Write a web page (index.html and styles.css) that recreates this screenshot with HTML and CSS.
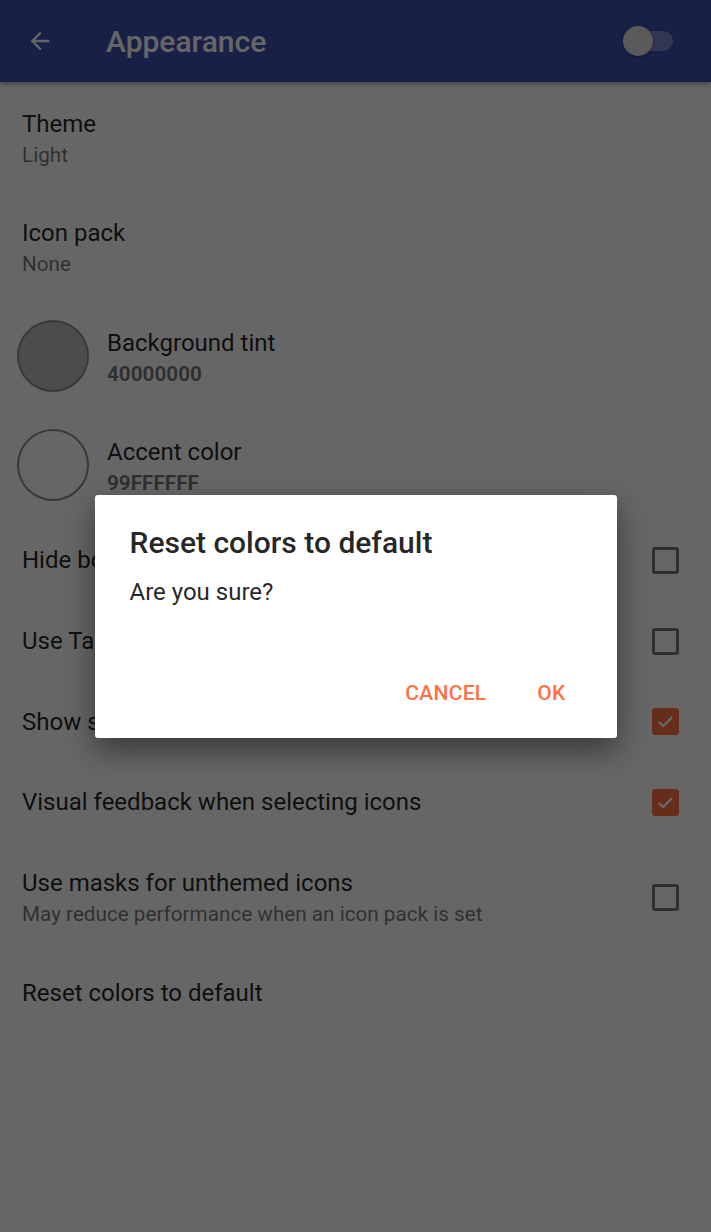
FILE: index.html
```html
<!DOCTYPE html>
<html>
<head>
<meta charset="utf-8">
<link rel="stylesheet" href="styles.css">
</head>
<body>
<div class="app">
  <header class="appbar">
    <svg class="back" width="28" height="28" viewBox="0 0 24 24"><path d="M20 11H7.83l5.59-5.59L12 4l-8 8 8 8 1.41-1.41L7.83 13H20v-2z" fill="#fff"/></svg>
    <div class="appbar-title">Appearance</div>
    <div class="switch"><div class="track"></div><div class="thumb"></div></div>
  </header>
  <main class="list">
    <div class="row two">
      <div class="text"><div class="title">Theme</div><div class="summary">Light</div></div>
    </div>
    <div class="row two">
      <div class="text"><div class="title">Icon pack</div><div class="summary">None</div></div>
    </div>
    <div class="row two color">
      <div class="swatch tint"></div>
      <div class="text"><div class="title">Background tint</div><div class="summary bold">40000000</div></div>
    </div>
    <div class="row two color">
      <div class="swatch accent"></div>
      <div class="text"><div class="title">Accent color</div><div class="summary bold">99FFFFFF</div></div>
    </div>
    <div class="row one">
      <div class="text"><div class="title">Hide bottom bar</div></div>
      <div class="cb"></div>
    </div>
    <div class="row one">
      <div class="text"><div class="title">Use Tab layout</div></div>
      <div class="cb"></div>
    </div>
    <div class="row one">
      <div class="text"><div class="title">Show scrollbar</div></div>
      <div class="cb checked"><svg width="21" height="21" viewBox="0 0 24 24"><path d="M4.5 12.5l4.8 4.8L19.5 7" fill="none" stroke="#fff" stroke-width="2.6"/></svg></div>
    </div>
    <div class="row one">
      <div class="text"><div class="title">Visual feedback when selecting icons</div></div>
      <div class="cb checked"><svg width="21" height="21" viewBox="0 0 24 24"><path d="M4.5 12.5l4.8 4.8L19.5 7" fill="none" stroke="#fff" stroke-width="2.6"/></svg></div>
    </div>
    <div class="row two masks">
      <div class="text"><div class="title">Use masks for unthemed icons</div><div class="summary">May reduce performance when an icon pack is set</div></div>
      <div class="cb"></div>
    </div>
    <div class="row one">
      <div class="text"><div class="title">Reset colors to default</div></div>
    </div>
  </main>
</div>
<div class="scrim">
  <div class="dialog">
    <div class="dlg-title">Reset colors to default</div>
    <div class="dlg-body">Are you sure?</div>
    <div class="dlg-actions">
      <div class="btn">CANCEL</div>
      <div class="btn ok">OK</div>
    </div>
  </div>
</div>
</body>
</html>
```

FILE: styles.css
```css
* { box-sizing: border-box; }
html, body { margin: 0; padding: 0; }
body {
  width: 711px;
  height: 1232px;
  overflow: hidden;
  background: #ffffff;
  font-family: Roboto, "Noto Sans", sans-serif;
  position: relative;
}
.app { width: 711px; height: 1232px; background: #fff; }
.appbar {
  height: 82px;
  background: #3F51B5;
  display: flex;
  align-items: center;
  box-shadow: 0 2px 5px rgba(0,0,0,0.35);
  position: relative;
  z-index: 1;
}
.back { margin-left: 26px; flex: none; }
.appbar-title {
  margin-left: 52px;
  color: #fff;
  font-size: 30px;
  font-weight: 500;
  flex: 1;
}
.switch {
  position: relative;
  width: 56px;
  height: 32px;
  margin-right: 34px;
}
.switch .track {
  position: absolute;
  left: 18px; top: 6px;
  width: 34px; height: 20px;
  border-radius: 10px;
  background: rgba(255,255,255,0.32);
}
.switch .thumb {
  position: absolute;
  left: 2px; top: 1px;
  width: 30px; height: 30px;
  border-radius: 50%;
  background: #e0e0e0;
  box-shadow: 0 1px 3px rgba(0,0,0,0.4);
}
.list { display: flex; flex-direction: column; }
.row {
  display: flex;
  align-items: center;
  padding: 0 32px 0 22px;
}
.row.two { height: 109.5px; padding-top: 6px; }
.row.one { height: 80.7px; }
.row.color { padding-left: 17px; padding-top: 0; }
.row.masks { padding-top: 2px; }
.row.masks .cb { margin-top: -2px; }
.text { flex: 1; min-width: 0; }
.row.color .text { margin-left: 18px; padding-top: 6px; }
.title {
  font-size: 24px;
  line-height: 30px;
  color: rgba(0,0,0,0.87);
  white-space: nowrap;
}
.summary {
  font-size: 20.7px;
  line-height: 32px;
  color: rgba(0,0,0,0.54);
  white-space: nowrap;
}
.summary.bold { font-weight: 700; }
.swatch {
  width: 72px; height: 72px;
  border-radius: 50%;
  border: 2.5px solid #8e8e8e;
  flex: none;
}
.swatch.tint { background: #bfbfbf; }
.swatch.accent { background: #ffffff; }
.cb {
  width: 27px; height: 27px;
  border: 3px solid rgba(0,0,0,0.54);
  border-radius: 3px;
  flex: none;
  display: flex;
  align-items: center;
  justify-content: center;
}
.cb.checked { background: #FF7043; border-color: #FF7043; }
.scrim {
  position: absolute;
  left: 0; top: 0;
  width: 711px; height: 1232px;
  background: rgba(0,0,0,0.6);
  display: flex;
  align-items: center;
  justify-content: center;
  z-index: 5;
}
.dialog {
  width: 522px;
  height: 243px;
  background: #fff;
  border-radius: 3px;
  box-shadow: 0 12px 30px rgba(0,0,0,0.45);
  padding-top: 32px;
  display: flex;
  flex-direction: column;
}
.dlg-title {
  padding-left: 35px;
  font-size: 30px;
  font-weight: 500;
  line-height: 32px;
  color: rgba(0,0,0,0.87);
}
.dlg-body {
  margin-top: 18px;
  padding-left: 35px;
  font-size: 24px;
  line-height: 30px;
  color: rgba(0,0,0,0.87);
}
.dlg-actions {
  margin-top: auto;
  margin-bottom: 20px;
  height: 50px;
  display: flex;
  justify-content: flex-end;
  align-items: center;
  gap: 10px;
  padding-right: 21px;
}
.btn {
  color: #FF7043;
  font-size: 21px;
  font-weight: 500;
  letter-spacing: 0.3px;
  padding: 0 11px;
  height: 50px;
  display: flex;
  align-items: center;
  justify-content: center;
}
.btn.ok { min-width: 88px; }
```
